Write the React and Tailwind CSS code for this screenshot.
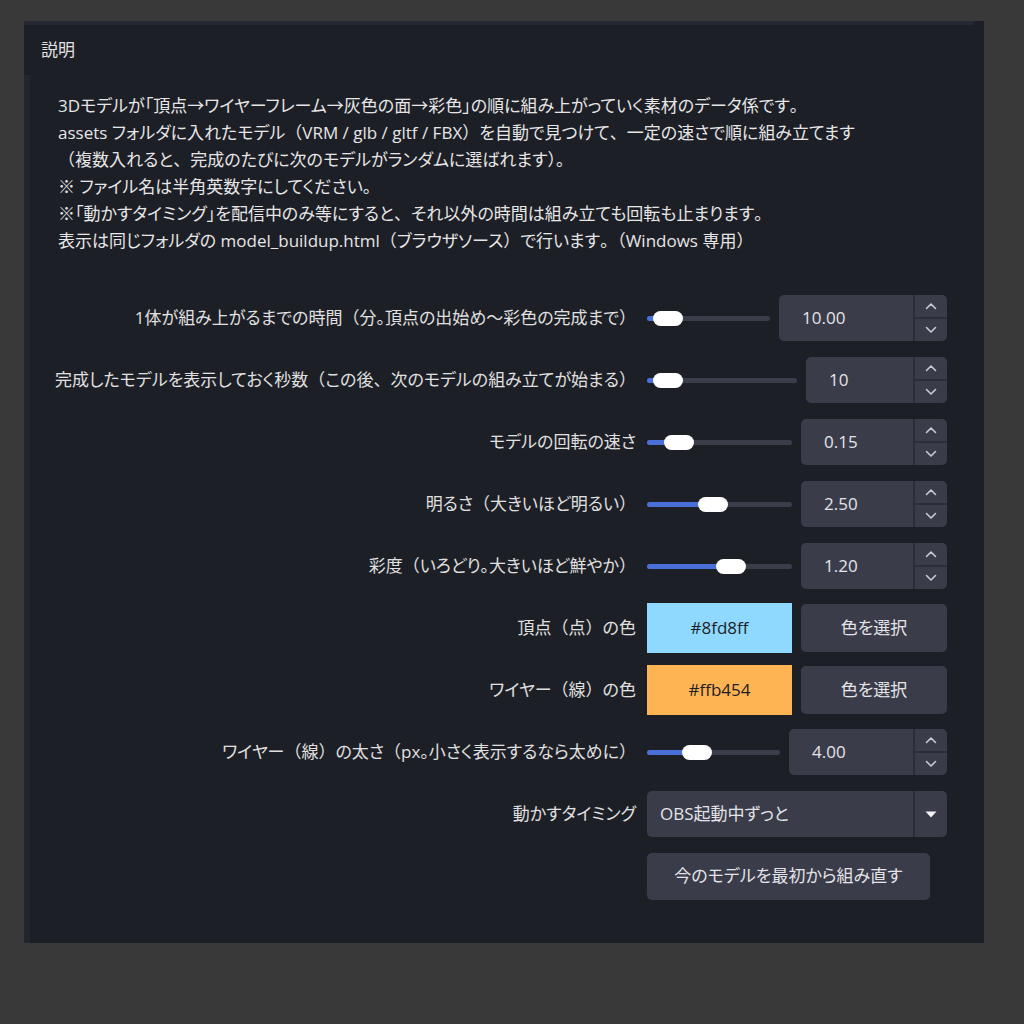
import React from "react";

const FONT = {
  fontFamily: '"Open Sans", "Noto Sans CJK JP", sans-serif',
  fontFeatureSettings: '"palt"',
};

// Proportional kana, but brackets and punctuation keep their full width
const LABEL_FULL = /([（）、])/;
const TEXT_FULL = /([（）、。])/;
const Jp = ({ text, full = LABEL_FULL }) =>
  text.split(full).map((part, i) =>
    full.test(part) ? (
      <span key={i} style={{ fontFeatureSettings: "normal" }}>
        {part}
      </span>
    ) : (
      <React.Fragment key={i}>{part}</React.Fragment>
    )
  );

const description = [
  "3Dモデルが「頂点→ワイヤーフレーム→灰色の面→彩色」の順に組み上がっていく素材のデータ係です。",
  "assets フォルダに入れたモデル（VRM / glb / gltf / FBX）を自動で見つけて、一定の速さで順に組み立てます",
  "（複数入れると、完成のたびに次のモデルがランダムに選ばれます）。",
  "※ ファイル名は半角英数字にしてください。",
  "※「動かすタイミング」を配信中のみ等にすると、それ以外の時間は組み立ても回転も止まります。",
  "表示は同じフォルダの model_buildup.html（ブラウザソース）で行います。（Windows 専用）",
];

const Chevron = ({ up }) => (
  <svg width="12" height="8" viewBox="0 0 12 8" fill="none">
    <path
      d={up ? "M1.5 6.5 L6 2 L10.5 6.5" : "M1.5 1.5 L6 6 L10.5 1.5"}
      stroke="#c9cad3"
      strokeWidth="1.6"
      strokeLinecap="round"
      strokeLinejoin="round"
    />
  </svg>
);

const Slider = ({ width, thumb }) => (
  <div className={`relative h-[16px] flex items-center ${width}`}>
    <div className="h-[5px] w-full rounded-full bg-[#3b3d4a]" />
    <div
      className="absolute left-0 h-[5px] rounded-full bg-[#4a6fd8]"
      style={{ width: thumb + 15 }}
    />
    <div
      className="absolute top-[1px] h-[15px] w-[30px] rounded-full bg-white"
      style={{ left: thumb }}
    />
  </div>
);

const SpinBox = ({ value, width }) => (
  <div className={`flex h-[46px] rounded-[5px] bg-[#3a3c4a] ${width}`}>
    <div className="flex flex-1 items-center pl-[23px] text-[17px] text-[#e4e4e8]">
      {value}
    </div>
    <div className="flex w-[34px] flex-col border-l-2 border-[#2b2d38]">
      <div className="flex flex-1 items-center justify-center border-b-2 border-[#2b2d38]">
        <Chevron up />
      </div>
      <div className="flex flex-1 items-center justify-center">
        <Chevron />
      </div>
    </div>
  </div>
);

const Row = ({ label, children }) => (
  <div className="flex h-[62px] items-center">
    <div className="w-[617px] pr-[11px] text-right text-[17px] text-[#e0e0e0]">
      <Jp text={label} />
    </div>
    <div className="flex w-[300px] items-center justify-between">{children}</div>
  </div>
);

const ColorRow = ({ label, hex, swatch }) => (
  <Row label={label}>
    <div
      className={`flex h-[50px] w-[145px] items-center justify-center text-[17px] text-[#1d1f26] ${swatch}`}
    >
      {hex}
    </div>
    <div className="flex h-[48px] w-[146px] items-center justify-center rounded-[5px] bg-[#3a3c4a] text-[17px] text-[#e4e4e8]">
      色を選択
    </div>
  </Row>
);

export default function App() {
  return (
    <div className="h-[1024px] w-[1024px] bg-[#393939] pl-[24px] pt-[21px]" style={FONT}>
      <div className="flex h-[922px] w-[960px] flex-col bg-[#1d1f26]">
        <div className="mr-[10px] h-[4px] bg-[#272932]" />
        <div className="flex h-[50px] items-center px-[17px] text-[17px] text-[#e2e2e2]">
          説明
        </div>

        <div className="flex-1 rounded-tr-[4px] border-l-[6px] border-[#23252c]">
          <div className="pl-[28px] pt-[17px] text-[17px] leading-[27px] text-[#e6e6e6]">
            {description.map((line) => (
              <div key={line}>
                <Jp text={line} full={TEXT_FULL} />
              </div>
            ))}
          </div>

          <div className="mt-[33px] flex flex-col">
            <Row label="1体が組み上がるまでの時間（分。頂点の出始め〜彩色の完成まで）">
              <Slider width="w-[123px]" thumb={6} />
              <SpinBox value="10.00" width="w-[168px]" />
            </Row>
            <Row label="完成したモデルを表示しておく秒数（この後、次のモデルの組み立てが始まる）">
              <Slider width="w-[150px]" thumb={6} />
              <SpinBox value="10" width="w-[141px]" />
            </Row>
            <Row label="モデルの回転の速さ">
              <Slider width="w-[145px]" thumb={17} />
              <SpinBox value="0.15" width="w-[146px]" />
            </Row>
            <Row label="明るさ（大きいほど明るい）">
              <Slider width="w-[145px]" thumb={51} />
              <SpinBox value="2.50" width="w-[146px]" />
            </Row>
            <Row label="彩度（いろどり。大きいほど鮮やか）">
              <Slider width="w-[145px]" thumb={69} />
              <SpinBox value="1.20" width="w-[146px]" />
            </Row>
            <ColorRow label="頂点（点）の色" hex="#8fd8ff" swatch="bg-[#8fd8ff]" />
            <ColorRow label="ワイヤー（線）の色" hex="#ffb454" swatch="bg-[#ffb454]" />
            <Row label="ワイヤー（線）の太さ（px。小さく表示するなら太めに）">
              <Slider width="w-[133px]" thumb={35} />
              <SpinBox value="4.00" width="w-[158px]" />
            </Row>
            <Row label="動かすタイミング">
              <div className="flex h-[46px] w-[300px] rounded-[5px] bg-[#3a3c4a]">
                <div className="flex flex-1 items-center pl-[13px] text-[17px] text-[#e4e4e8]">
                  OBS起動中ずっと
                </div>
                <div className="flex w-[34px] items-center justify-center border-l-2 border-[#2b2d38]">
                  <svg width="12" height="7" viewBox="0 0 12 7">
                    <path d="M0.5 0.5 H11.5 L6 6.5 Z" fill="#f2f2f4" />
                  </svg>
                </div>
              </div>
            </Row>
            <Row label="">
              <div className="flex h-[47px] w-[283px] items-center justify-center rounded-[5px] bg-[#3a3c4a] text-[17px] text-[#e4e4e8]">
                今のモデルを最初から組み直す
              </div>
            </Row>
          </div>
        </div>
      </div>
    </div>
  );
}
